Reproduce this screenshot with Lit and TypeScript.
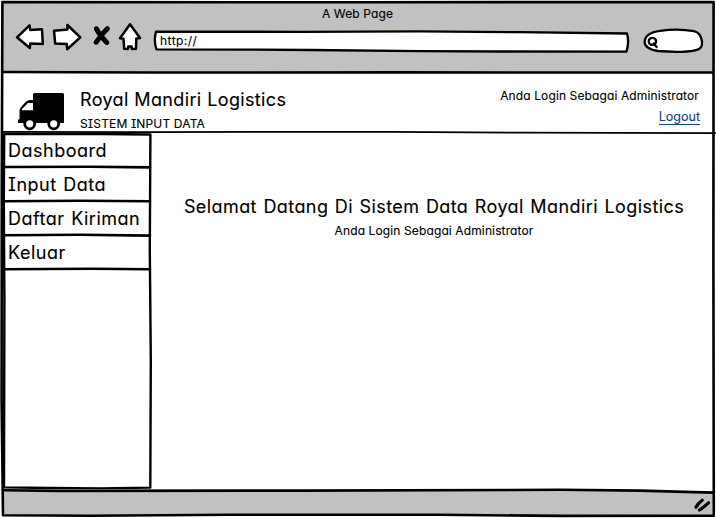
import { LitElement, html, css, svg } from "lit";
import { customElement } from "lit/decorators.js";

const MENU = ["Dashboard", "Input Data", "Daftar Kiriman", "Keluar"];

@customElement("app-root")
export class AppRoot extends LitElement {
  static styles = css`
    :host {
      display: block;
      position: relative;
      width: 716px;
      height: 518px;
      overflow: hidden;
      background: #fff;
      color: #000;
      font-family: Inter, "Liberation Sans", sans-serif;
      font-feature-settings: "cv11", "cv08";
      -webkit-text-stroke: 0.12px currentColor;
    }
    * { box-sizing: border-box; }
    svg { display: block; overflow: visible; }
    .page { display: flex; flex-direction: column; height: 516px; margin: 0 3px 0 2px; padding-top: 2px; }
    .chrome { height: 71px; background: #c1c1c1; flex: none; }
    .title { height: 23px; line-height: 23px; text-align: center; font-size: 12px; letter-spacing: 0.12px; }
    .tools { display: flex; height: 32px; padding-left: 12px; align-items: flex-start; }
    .buttons { width: 130px; height: 32px; flex: none; }
    .url { position: relative; width: 478px; height: 32px; margin-left: 8px; flex: none; }
    .url span { position: relative; display: block; padding-left: 8px; line-height: 32px; font-size: 12px; letter-spacing: 0.45px; }
    .sketch { position: absolute; left: 0; top: 0; }
    .search { width: 62px; height: 32px; margin-left: 12px; flex: none; }
    .brand { display: flex; height: 59px; flex: none; padding: 18px 14px 0 15px; }
    .truck { flex: none; width: 48px; }
    .names { margin-left: 15px; flex: 1; white-space: nowrap; }
    .name { font-size: 18px; line-height: 20px; height: 22px; letter-spacing: 0.35px; word-spacing: 0.3px; margin-top: -1px; }
    .sub { font-size: 12px; line-height: 20px; letter-spacing: 0.15px; margin-top: 2px; }
    .user { text-align: right; white-space: nowrap; }
    .who { font-size: 12px; line-height: 14px; margin-top: -2px; letter-spacing: 0.12px; }
    .logout { display: inline-block; margin-top: 7px; margin-right: -1px; font-size: 12.5px; line-height: 14px; color: #10458f; border-bottom: 1px solid #10458f; }
    .body { display: flex; flex: 1; }
    .menu { width: 149px; flex: none; padding-top: 2px; }
    .item { height: 34px; line-height: 34px; padding-left: 6px; font-size: 18px; letter-spacing: 0.5px; word-spacing: 1px; white-space: nowrap; }
    .content { flex: 1; padding: 64px 0 0 4px; text-align: center; white-space: nowrap; }
    .welcome { font-size: 18px; line-height: 22px; letter-spacing: 0.42px; word-spacing: 1px; }
    .content .who { margin-top: 5px; line-height: 16px; }
    .status { height: 25px; background: #c1c1c1; flex: none; }
    .frame { position: absolute; inset: 0; pointer-events: none; }
  `;

  private buttons() {
    return svg`<svg width="130" height="32" viewBox="14 25 130 32" fill="#fff" stroke="#000" stroke-width="2.5" stroke-linejoin="round" stroke-linecap="round">
      <path d="M17 37.3L29.5 25.4L30.3 30L42 29.3L42.8 44L30.3 43.5L29.8 48Z"/>
      <path d="M54 30.7L67.5 29.4L67.4 25L80.3 37.4L67.2 49.2L66.8 43.9L55.2 43.6Z"/>
      <path d="M96.5 28.8Q99.5 35 106.8 42.4M107.4 28.6Q101 34.5 96.2 42.2" stroke-width="5" fill="none"/>
      <path d="M130 24.3L140 38L136.3 38.6L136 48.8L131.8 49L131.6 46.5L128.2 46.5L128 49L124.2 48.8L123.5 38.8L120 38.2Z"/>
    </svg>`;
  }

  private frame() {
    return svg`<svg class="frame" width="716" height="518" viewBox="0 0 716 518" fill="none" stroke="#000" stroke-width="2.6" stroke-linecap="round" stroke-linejoin="round">
      <path d="M2.4 2L360 2.3L713.6 2L713.4 260L713.8 515.7L560 515.9L440 514.8L230 514.8L90 515.8L3 515.2L1.6 400L1.8 180L2.4 2Z"/>
      <path d="M3 72L150 72.5L400 72.4L713 72.5"/>
      <path d="M3 131.9L150 132.1L390 131.8L520 132.6L715.5 133.2" stroke-width="1.8"/>
      <path d="M4.2 134L100 134L150.4 134.5L149.8 250L150.8 360L150.3 487.6L100 488.4L50 488L4 487.4L4.4 300L3.8 200Z" stroke-width="2.4"/>
      <path d="M4 167L90 166.8L150 167.4M4 201.3L80 200.7L150 201.2M4 235.3L80 234.8L150 235.6M4 269.2L90 268.8L150 269.2"/>
      <path d="M6 489.6L150 489.6" stroke="#fff" stroke-width="0.7"/>
      <path d="M3 490.3L60 490.9L300 490.6L560 489.8L640 490.6L713 492.6"/>
      <path d="M696 507.2Q698 503.2 702.2 500.2M699.5 510Q704 507 708.5 502.8" stroke-width="3.2"/>
    </svg>`;
  }

  render() {
    return html`
      <div class="page">
        <header class="chrome">
          <div class="title">A Web Page</div>
          <div class="tools">
            <div class="buttons">${this.buttons()}</div>
            <div class="url">
              <svg class="sketch" width="478" height="32" viewBox="152 25 478 32" fill="#fff" stroke="#000" stroke-width="2.3" stroke-linejoin="round">
                <path d="M156 31.7L300 31.8L420 31.4L520 32.2L627 33.5Q629.5 42 626.4 51.7L500 51.5L420 51.2L310 50L240 49.6L156.5 49.3Q153.5 41 156 31.7Z"/>
              </svg>
              <span>http://</span>
            </div>
            <div class="search">
              <svg width="62" height="32" viewBox="642 25 62 32" fill="#fff" stroke="#000" stroke-width="2.3" stroke-linecap="round">
                <path d="M660 30.8C671 29.2 684 29.3 694 31.1C700 32.5 701.4 37 702 41.5C702.5 47 700.7 49.1 695 50.3C683 52.8 672 52.1 658 51C650 50 644.4 46.5 644.7 41.5C645 35.5 651 32 660 30.8Z"/>
                <ellipse cx="652.4" cy="41.4" rx="3.7" ry="3.5"/>
                <path d="M653.6 43.4L656.6 47"/>
              </svg>
            </div>
          </div>
        </header>
        <section class="brand">
          <div class="truck">
            <svg width="48" height="40" viewBox="17 91 48 40">
              <path d="M34.5 93H62.5Q64 93 64 94.5V123H18V119.5H19.5V110Q20 108 22 106L26 101.5Q28 100 30 100H33V94.5Q33 93 34.5 93Z"/>
              <path d="M22 110.2V109L28 103H33V110.2Z" fill="#fff"/>
              <circle cx="29.7" cy="123.8" r="5" fill="#fff" stroke="#000" stroke-width="2.8"/>
              <circle cx="53.7" cy="123.8" r="5" fill="#fff" stroke="#000" stroke-width="2.8"/>
            </svg>
          </div>
          <div class="names">
            <div class="name">Royal Mandiri Logistics</div>
            <div class="sub">SISTEM INPUT DATA</div>
          </div>
          <div class="user">
            <div class="who">Anda Login Sebagai Administrator</div>
            <a class="logout">Logout</a>
          </div>
        </section>
        <main class="body">
          <nav class="menu">${MENU.map((m) => html`<div class="item">${m}</div>`)}</nav>
          <section class="content">
            <div class="welcome">Selamat Datang Di Sistem Data Royal Mandiri Logistics</div>
            <div class="who">Anda Login Sebagai Administrator</div>
          </section>
        </main>
        <footer class="status"></footer>
      </div>
      ${this.frame()}
    `;
  }
}
